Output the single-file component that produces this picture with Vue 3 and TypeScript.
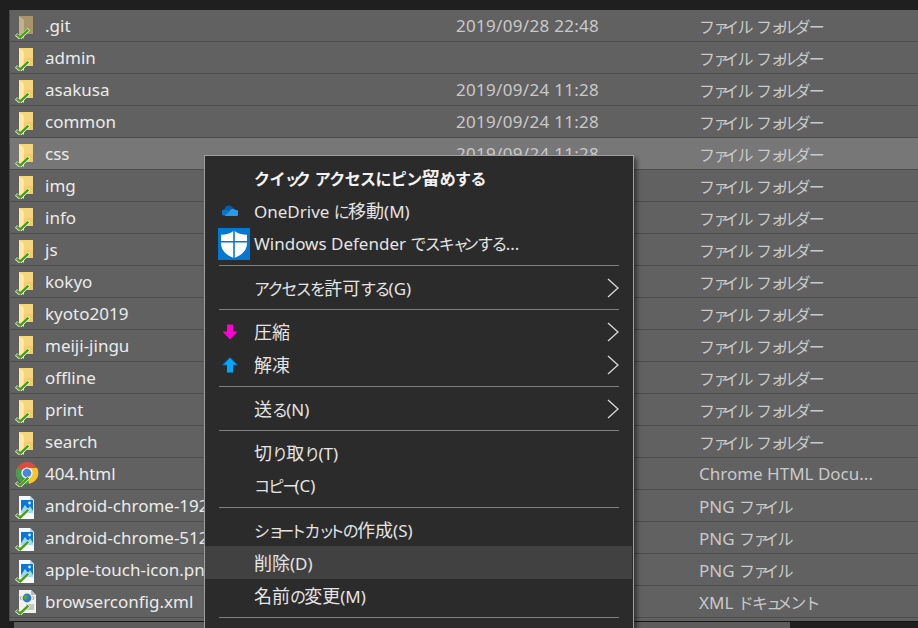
<template>
  <div class="explorer">
    <svg class="defs" width="0" height="0" aria-hidden="true">
      <defs>
        <symbol id="ico-check" viewBox="0 0 16 12">
          <path d="M1 7 L5.5 10.8 L15 1.4" fill="none" stroke="#f4f4f4" stroke-width="3.6" />
          <path d="M1.6 7.2 L5.5 10.2 L14.4 1.8" fill="none" stroke="#47a016" stroke-width="2.6" />
        </symbol>
        <symbol id="ico-folder" viewBox="0 0 24 24">
          <path d="M7 9 H18 V19 H7 Z" fill="#f3cb6c" />
          <path d="M4 1 L18 1 L18 11 L9 11 L9 20 L4 20 Z" fill="#f6d57f" />
          <path d="M4 1 L9 5 L9 24 L4 20 Z" fill="#fdeaa8" />
        </symbol>
        <symbol id="ico-folder-dim" viewBox="0 0 24 24">
          <path d="M4 1 H18 V19 H4 Z" fill="#a8966a" />
          <path d="M4 1 L9 5 L9 24 L4 20 Z" fill="#bfb28f" />
        </symbol>
        <symbol id="ico-chrome" viewBox="0 0 24 26">
          <circle cx="12" cy="11" r="11" fill="#dd4b3e" />
          <path d="M12 11 L3.5 18 A11 11 0 0 1 2.4 5.5 Z" fill="#45a14a" />
          <path d="M12 11 L3.5 18 A11 11 0 0 0 23 11 Z" fill="#3fa047" />
          <path d="M12 6 H22.2 A11 11 0 0 1 14 21.8 L12 11 Z" fill="#f6c431" />
          <circle cx="12" cy="11" r="5.6" fill="#fff" />
          <circle cx="12" cy="11" r="4.4" fill="#4a86e8" />
        </symbol>
        <symbol id="ico-png" viewBox="0 0 24 26">
          <path d="M4 2 H15 L19 6 V25 H4 Z" fill="#f7f8fa" />
          <path d="M15 2 V6 H19 Z" fill="#c9d0d8" />
          <rect x="6" y="6" width="12" height="13" fill="#0b78d7" />
          <path d="M6 17 L10 11 L13 15 L15 12 L18 17 V19 H6 Z" fill="#9fd4f8" />
          <circle cx="14.5" cy="9" r="1.4" fill="#cfe9fb" />
        </symbol>
        <symbol id="ico-xml" viewBox="0 0 24 26">
          <path d="M4 0 H16 L21 5 V23 H4 Z" fill="#f1f1ee" />
          <path d="M16 0 V5 H21 Z" fill="#bcbcb6" />
          <circle cx="12" cy="8" r="4.4" fill="#2a7bd0" />
          <path d="M9 6 L12 4.5 L13 7 L11 10 L9 9 Z" fill="#55a832" />
          <path d="M6.5 6 L5 8 L6.5 10 M17.5 6 L19 8 L17.5 10" fill="none" stroke="#8a8a8a" stroke-width="0.8" />
          <path d="M11 15 H19 M11 17 H19 M11 19 H19" stroke="#9a9a9a" stroke-width="1" />
        </symbol>
      </defs>
    </svg>

    <div class="list">
      <div v-for="row in rows" :key="row.name" class="row" :class="{ active: row.name === 'css' }">
        <span class="file-icon">
          <svg class="main-icon" width="24" height="26" aria-hidden="true">
            <use :href="'#ico-' + row.kind" />
          </svg>
          <svg class="check" width="15" height="11" aria-hidden="true"><use href="#ico-check" /></svg>
        </span>
        <span class="name">{{ row.name }}</span>
        <span class="date">{{ row.date }}</span>
        <span class="type"><span v-for="(run, r) in splitRuns(row.type)" :key="r" :class="run.cls">{{ run.text }}</span></span>
      </div>
    </div>
    <div class="hscroll"><div class="thumb"></div></div>

    <div class="menu">
      <template v-for="(item, i) in menu" :key="i">
        <div v-if="item.sep" class="sep"></div>
        <div v-else class="item" :class="{ bold: item.bold, hover: item.hover }">
          <span class="item-icon">
            <svg v-if="item.icon === 'onedrive'" width="16" height="11" viewBox="0 0 16 11" aria-hidden="true">
              <path d="M2.6 5 A4.4 4.4 0 0 1 11 3 A3.6 3.6 0 0 1 13.4 5 L7 8.5 Z" fill="#0a5ea8" />
              <path d="M1.2 10.4 A2.7 2.7 0 0 1 3 5 L6.4 5.2 L10 10.6 Z" fill="#1174c9" />
              <path d="M2.6 11 L7.5 6.4 A3.6 3.6 0 0 1 13.4 5 A3 3 0 0 1 14.4 11 Z" fill="#2b9be8" />
            </svg>
            <svg v-else-if="item.icon === 'shield'" class="shield" width="32" height="32" viewBox="0 0 32 32" aria-hidden="true">
              <rect width="32" height="32" fill="#0078d4" />
              <path d="M16 2.5 C12.5 5.6 8 6.8 3 6.8 V15 C3 23 9 27.5 16 30 C23 27.5 29 23 29 15 V6.8 C24 6.8 19.5 5.6 16 2.5 Z" fill="#fff" />
              <path d="M15.2 2 H16.8 V31 H15.2 Z M2 13 H30 V14.6 H2 Z" fill="#0078d4" />
            </svg>
            <svg v-else-if="item.icon === 'down'" width="16" height="16" viewBox="0 0 16 16" aria-hidden="true">
              <path d="M5 0.5 H11 V7.5 H15.5 L8 15.5 L0.5 7.5 H5 Z" fill="#ff00d4" />
            </svg>
            <svg v-else-if="item.icon === 'up'" width="16" height="16" viewBox="0 0 16 16" aria-hidden="true">
              <path d="M8 0.5 L15.5 8 H11 V15.5 H5 V8 H0.5 Z" fill="#00a8ff" />
              <path d="M8 0.5 L0.5 8 H5 M8 0.5 L15.5 8 H11" fill="none" stroke="#0a5ea8" stroke-width="0.8" />
            </svg>
          </span>
          <span class="label"><span v-for="(run, r) in splitRuns(item.label ?? '')" :key="r" :class="run.cls">{{ run.text }}</span></span>
          <svg v-if="item.sub" class="chevron" width="14" height="20" viewBox="0 0 14 20" aria-hidden="true">
            <path d="M2 1 L12 10 L2 19" fill="none" stroke="#d8d8d8" stroke-width="1.3" />
          </svg>
        </div>
      </template>
    </div>
  </div>
</template>

<script setup lang="ts">
interface Row {
  name: string
  kind: string
  date: string
  type: string
}

interface MenuItem {
  label?: string
  icon?: string
  bold?: boolean
  sub?: boolean
  hover?: boolean
  sep?: boolean
}

const FOLDER = 'ファイル フォルダー'
const PNG = 'PNG ファイル'
const DATE = '2019/09/24 11:28'

const rows: Row[] = [
  { name: '.git', kind: 'folder-dim', date: '2019/09/28 22:48', type: FOLDER },
  { name: 'admin', kind: 'folder', date: '', type: FOLDER },
  { name: 'asakusa', kind: 'folder', date: DATE, type: FOLDER },
  { name: 'common', kind: 'folder', date: DATE, type: FOLDER },
  { name: 'css', kind: 'folder', date: DATE, type: FOLDER },
  { name: 'img', kind: 'folder', date: DATE, type: FOLDER },
  { name: 'info', kind: 'folder', date: DATE, type: FOLDER },
  { name: 'js', kind: 'folder', date: DATE, type: FOLDER },
  { name: 'kokyo', kind: 'folder', date: DATE, type: FOLDER },
  { name: 'kyoto2019', kind: 'folder', date: DATE, type: FOLDER },
  { name: 'meiji-jingu', kind: 'folder', date: DATE, type: FOLDER },
  { name: 'offline', kind: 'folder', date: DATE, type: FOLDER },
  { name: 'print', kind: 'folder', date: DATE, type: FOLDER },
  { name: 'search', kind: 'folder', date: DATE, type: FOLDER },
  { name: '404.html', kind: 'chrome', date: DATE, type: 'Chrome HTML Docu...' },
  { name: 'android-chrome-192x192.png', kind: 'png', date: DATE, type: PNG },
  { name: 'android-chrome-512x512.png', kind: 'png', date: DATE, type: PNG },
  { name: 'apple-touch-icon.png', kind: 'png', date: DATE, type: PNG },
  { name: 'browserconfig.xml', kind: 'xml', date: DATE, type: 'XML ドキュメント' }
]

const menu: MenuItem[] = [
  { label: 'クイック アクセスにピン留めする', bold: true },
  { label: 'OneDrive に移動(M)', icon: 'onedrive' },
  { label: 'Windows Defender でスキャンする...', icon: 'shield' },
  { sep: true },
  { label: 'アクセスを許可する(G)', sub: true },
  { sep: true },
  { label: '圧縮', icon: 'down', sub: true },
  { label: '解凍', icon: 'up', sub: true },
  { sep: true },
  { label: '送る(N)', sub: true },
  { sep: true },
  { label: '切り取り(T)' },
  { label: 'コピー(C)' },
  { sep: true },
  { label: 'ショートカットの作成(S)' },
  { label: '削除(D)', hover: true },
  { label: '名前の変更(M)' },
  { sep: true }
]

// 原图的假名是窄字体，按字符类型分段后用 letter-spacing 收紧
const RUNS = /ー+|[ァィゥェォッャュョ]+|(?:(?![ァィゥェォッャュョー])[\u3040-\u30ff])+|[\u4e00-\u9fff]+|[^\u3040-\u30ff\u4e00-\u9fff]+/g

const splitRuns = (text: string): { text: string; cls: string }[] => {
  return (text.match(RUNS) ?? []).map((part) => {
    let cls = 'latin'
    if (part[0] === 'ー') cls = 'bar'
    else if (/^[ァィゥェォッャュョ]/.test(part)) cls = 'small-kana'
    else if (/^[\u3040-\u30ff]/.test(part)) cls = 'kana'
    else if (/^[\u4e00-\u9fff]/.test(part)) cls = 'kanji'
    return { text: part, cls }
  })
}
</script>

<style>
html,
body {
  margin: 0;
  background: #1f1f1f;
  overflow: hidden;
}
</style>

<style scoped>
.explorer {
  position: relative;
  width: 918px;
  height: 628px;
  overflow: hidden;
  background: #1f1f1f;
  padding-top: 10px;
  box-sizing: border-box;
  font-family: "Noto Sans", "Noto Sans CJK JP", sans-serif;
}

.defs {
  position: absolute;
}

.kana {
  font-size: 16px;
  letter-spacing: -1.8px;
}

.small-kana {
  font-size: 16px;
  letter-spacing: -6px;
}

.bar {
  font-size: 16px;
  letter-spacing: -4px;
}

.kanji {
  font-size: 18px;
}

.list {
  margin-left: 9px;
  border-left: 1px solid #4a4a4a;
  background: #616161;
  height: 611px;
}

.row {
  display: flex;
  align-items: center;
  height: 32px;
  box-sizing: border-box;
  border-bottom: 1px solid #4c4c4c;
  font-size: 17px;
  color: #c9c9c9;
  white-space: nowrap;
}

.row.active {
  background: #777777;
}

.file-icon {
  position: relative;
  display: block;
  flex: none;
  width: 26px;
  height: 26px;
  margin-left: 3px;
}

.main-icon {
  position: absolute;
  left: 2px;
  top: 1px;
}

.check {
  position: absolute;
  left: 2px;
  top: 15px;
}

.name {
  width: 411px;
  margin-left: 6px;
  color: #ebebeb;
  flex: none;
}

.date {
  width: 243px;
  flex: none;
  letter-spacing: 0.3px;
}

.type {
  flex: none;
}

.hscroll {
  margin-left: 14px;
  border-top: 1px solid #141414;
  height: 6px;
}

.thumb {
  width: 776px;
  height: 100%;
  background: #5c5c5c;
}

.menu {
  position: absolute;
  left: 204px;
  top: 155px;
  width: 428px;
  height: 500px;
  background: #2b2b2b;
  border: 1px solid #a0a0a0;
  padding-top: 5px;
  box-shadow: 3px 3px 4px rgba(0, 0, 0, 0.45);
  color: #e4e4e4;
  font-size: 17px;
}

.item {
  position: relative;
  display: flex;
  align-items: center;
  height: 33px;
  margin-right: 1px;
}

.item.hover {
  background: #414141;
}

.item.bold {
  font-weight: 700;
  color: #f2f2f2;
}

.item.bold .kana {
  letter-spacing: -0.6px;
}

.item-icon {
  flex: none;
  display: flex;
  align-items: center;
  justify-content: center;
  width: 49px;
}

.shield {
  margin-left: 8px;
  display: block;
}

.label {
  white-space: nowrap;
  padding-bottom: 2px;
}

.chevron {
  position: absolute;
  right: 12px;
  top: 7px;
}

.sep {
  height: 1px;
  background: #7f7f7f;
  margin: 5px 14px;
}
</style>
